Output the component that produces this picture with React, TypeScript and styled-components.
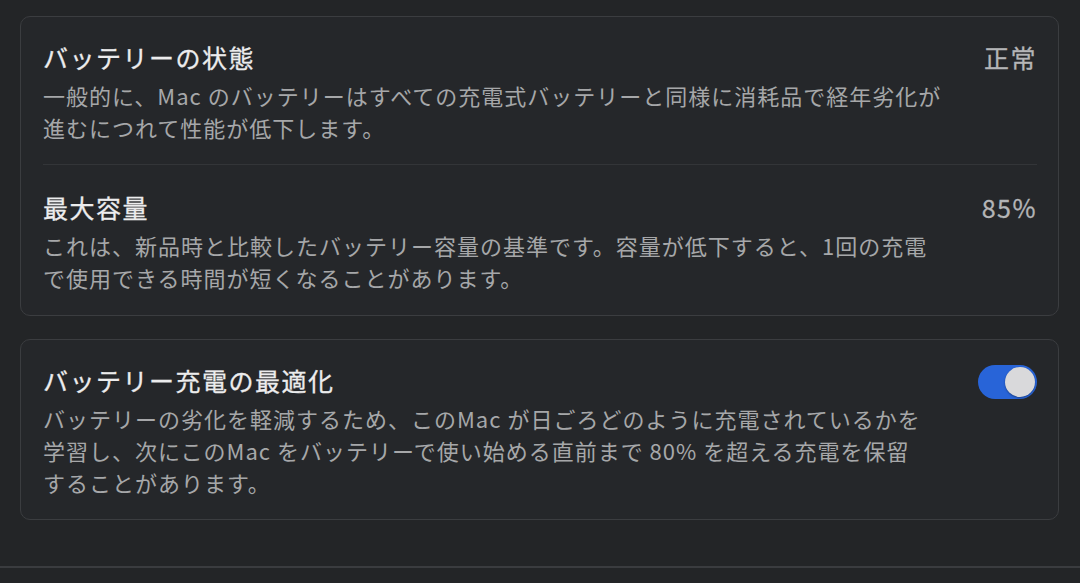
import React, { useState } from 'react';
import styled, { createGlobalStyle } from 'styled-components';

const GlobalStyle = createGlobalStyle`
  html, body {
    margin: 0;
    padding: 0;
    background: #232527;
  }
  body {
    font-family: "Noto Sans CJK JP", "Noto Sans", sans-serif;
    -webkit-font-smoothing: antialiased;
  }
`;

type Setting = {
  title: string;
  lines: string[];
  value?: string;
};

const healthRows: Setting[] = [
  {
    title: 'バッテリーの状態',
    value: '正常',
    lines: [
      '一般的に、Mac のバッテリーはすべての充電式バッテリーと同様に消耗品で経年劣化が',
      '進むにつれて性能が低下します。',
    ],
  },
  {
    title: '最大容量',
    value: '85%',
    lines: [
      'これは、新品時と比較したバッテリー容量の基準です。容量が低下すると、1回の充電',
      'で使用できる時間が短くなることがあります。',
    ],
  },
];

const optimizeRow: Setting = {
  title: 'バッテリー充電の最適化',
  lines: [
    'バッテリーの劣化を軽減するため、このMac が日ごろどのように充電されているかを',
    '学習し、次にこのMac をバッテリーで使い始める直前まで 80% を超える充電を保留',
    'することがあります。',
  ],
};

const App = () => {
  const [optimized, setOptimized] = useState(true);

  return (
    <>
      <GlobalStyle />
      <Page>
        <Card>
          {healthRows.map((row, i) => (
            <Row key={row.title} $divider={i > 0}>
              <RowText>
                <Title>{row.title}</Title>
                <Desc>
                  {row.lines.map(l => (
                    <Line key={l}>{l}</Line>
                  ))}
                </Desc>
              </RowText>
              <Value>{row.value}</Value>
            </Row>
          ))}
        </Card>

        <Card>
          <Row>
            <RowText>
              <Title>{optimizeRow.title}</Title>
              <Desc>
                {optimizeRow.lines.map(l => (
                  <Line key={l}>{l}</Line>
                ))}
              </Desc>
            </RowText>
            <Toggle $on={optimized} onClick={() => setOptimized(v => !v)}>
              <Knob $on={optimized} />
            </Toggle>
          </Row>
        </Card>
      </Page>
      <Footer />
    </>
  );
};

export default App;

const Page = styled.div`
  display: flex;
  flex-direction: column;
  gap: 23px;
  padding: 16px 21px 0 20px;
  height: 566px;
  box-sizing: border-box;
`;

const Card = styled.div`
  background: #25272a;
  border: 1px solid #3b3d40;
  border-radius: 10px;
  padding: 0 21px 0 22px;
`;

const Row = styled.div<{ $divider?: boolean }>`
  display: flex;
  justify-content: space-between;
  align-items: flex-start;
  padding: ${p => (p.$divider ? '27px 0 22px' : '25px 0 21px')};
  border-top: ${p => (p.$divider ? '1px solid #333538' : 'none')};
`;

const RowText = styled.div`
  display: flex;
  flex-direction: column;
  gap: 7px;
`;

const Title = styled.div`
  font-size: 25px;
  line-height: 30px;
  font-weight: 400;
  letter-spacing: 1.5px;
  color: #ececed;
  -webkit-text-stroke: 0.3px #ececed;
`;

const Desc = styled.div`
  display: flex;
  flex-direction: column;
  font-size: 22px;
  line-height: 32px;
  letter-spacing: 1px;
  color: #a6a7a9;
`;

const Line = styled.span`
  white-space: nowrap;
`;

const Value = styled.div`
  font-size: 25px;
  line-height: 30px;
  letter-spacing: 1.5px;
  color: #b4b5b7;
  white-space: nowrap;
  -webkit-text-stroke: 0.3px #b4b5b7;
`;

const Toggle = styled.button<{ $on: boolean }>`
  position: relative;
  flex: none;
  width: 59px;
  height: 34px;
  margin-top: 0;
  padding: 0;
  border: none;
  border-radius: 17px;
  background: ${p => (p.$on ? '#2864d8' : '#4a4c50')};
  cursor: pointer;
`;

const Knob = styled.span<{ $on: boolean }>`
  position: absolute;
  top: 2px;
  left: ${p => (p.$on ? '27px' : '2px')};
  width: 30px;
  height: 30px;
  border-radius: 50%;
  background: #d9d9db;
  box-shadow: 0 1px 2px rgba(0, 0, 0, 0.35);
`;

const Footer = styled.div`
  border-top: 2px solid #3a3c3f;
  height: 15px;
`;
